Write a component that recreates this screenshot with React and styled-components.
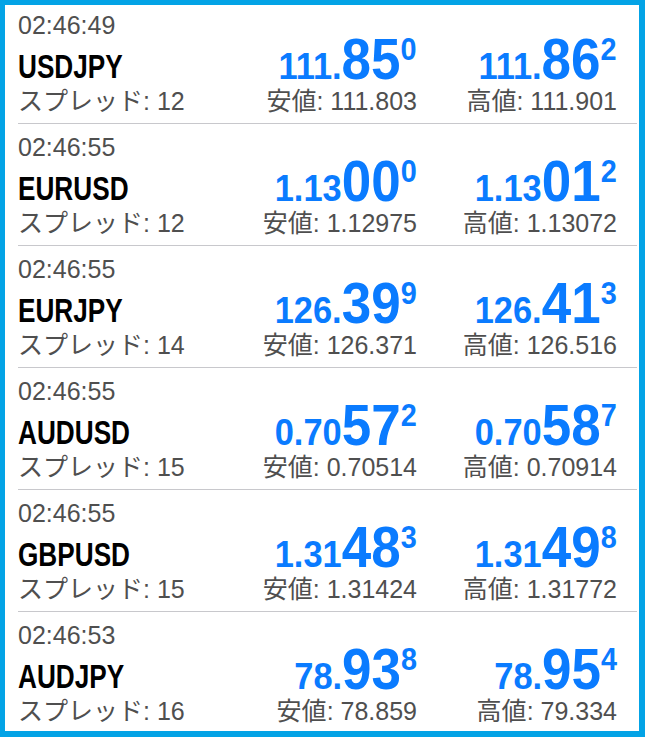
import React from "react";
import styled, { createGlobalStyle } from "styled-components";

const GlobalStyle = createGlobalStyle`
  html, body { margin: 0; padding: 0; background: #fff; }
  body { font-family: "Liberation Sans", "Noto Sans CJK JP", sans-serif; }
`;

const Frame = styled.div`
  width: 645px;
  height: 737px;
  box-sizing: border-box;
  border-style: solid;
  border-color: #03a3e6;
  border-width: 5px 6px 6px 5px;
  background: #fff;
  overflow: hidden;
`;

const List = styled.div`
  margin: -3px 2px 0 13px;
`;

const Row = styled.div`
  display: grid;
  grid-template-columns: 1fr 200px 200px;
  height: 122px;
  box-sizing: border-box;
  padding: 8px 20px 0 0;
  border-bottom: 1px solid #c8c8cc;
`;

const Info = styled.div`
  display: flex;
  flex-direction: column;
  align-items: flex-start;
`;

const Time = styled.div`
  font-family: "Liberation Sans", sans-serif;
  font-size: 25px;
  line-height: 30px;
  color: #4f4f4f;
`;

const Symbol = styled.div`
  margin-top: 9px;
  font-family: "Liberation Sans", sans-serif;
  font-weight: 700;
  font-size: 34px;
  line-height: 1;
  color: #000;
  transform: scaleX(0.77);
  transform-origin: left center;
  white-space: nowrap;
`;

const Detail = styled.div`
  margin-top: ${(p) => p.$gap}px;
  font-family: "Liberation Sans", "Noto Sans CJK JP", sans-serif;
  font-size: 25px;
  line-height: 1;
  color: #4f4f4f;
  white-space: nowrap;
`;

const Quote = styled.div`
  display: flex;
  flex-direction: column;
  align-items: flex-end;
  padding-top: 21px;
`;

const Price = styled.div`
  display: flex;
  align-items: baseline;
  height: 57px;
  overflow: visible;
  font-family: "Liberation Sans", sans-serif;
  font-weight: 700;
  line-height: 1;
  color: #0a7bff;
  transform: scaleX(0.93);
  transform-origin: right center;
  white-space: nowrap;
`;

const Small = styled.span`
  font-size: 37px;
`;

const Big = styled.span`
  font-size: 57px;
`;

const Sup = styled.span`
  font-size: 31px;
  align-self: flex-start;
  margin-top: 3px;
`;

const rows = [
  { time: "02:46:49", sym: "USDJPY", spread: 12, bid: ["111.", "85", "0"], low: "111.803", ask: ["111.", "86", "2"], high: "111.901" },
  { time: "02:46:55", sym: "EURUSD", spread: 12, bid: ["1.13", "00", "0"], low: "1.12975", ask: ["1.13", "01", "2"], high: "1.13072" },
  { time: "02:46:55", sym: "EURJPY", spread: 14, bid: ["126.", "39", "9"], low: "126.371", ask: ["126.", "41", "3"], high: "126.516" },
  { time: "02:46:55", sym: "AUDUSD", spread: 15, bid: ["0.70", "57", "2"], low: "0.70514", ask: ["0.70", "58", "7"], high: "0.70914" },
  { time: "02:46:55", sym: "GBPUSD", spread: 15, bid: ["1.31", "48", "3"], low: "1.31424", ask: ["1.31", "49", "8"], high: "1.31772" },
  { time: "02:46:53", sym: "AUDJPY", spread: 16, bid: ["78.", "93", "8"], low: "78.859", ask: ["78.", "95", "4"], high: "79.334" },
];

function QuoteCell({ parts, label, value }) {
  return (
    <Quote>
      <Price>
        <Small>{parts[0]}</Small>
        <Big>{parts[1]}</Big>
        <Sup>{parts[2]}</Sup>
      </Price>
      <Detail $gap={1}>
        {label}: {value}
      </Detail>
    </Quote>
  );
}

export default function App() {
  return (
    <>
      <GlobalStyle />
      <Frame>
        <List>
          {rows.map((r, i) => (
            <Row key={i}>
              <Info>
                <Time>{r.time}</Time>
                <Symbol>{r.sym}</Symbol>
                <Detail $gap={6}>スプレッド: {r.spread}</Detail>
              </Info>
              <QuoteCell parts={r.bid} label="安値" value={r.low} />
              <QuoteCell parts={r.ask} label="高値" value={r.high} />
            </Row>
          ))}
        </List>
      </Frame>
    </>
  );
}
